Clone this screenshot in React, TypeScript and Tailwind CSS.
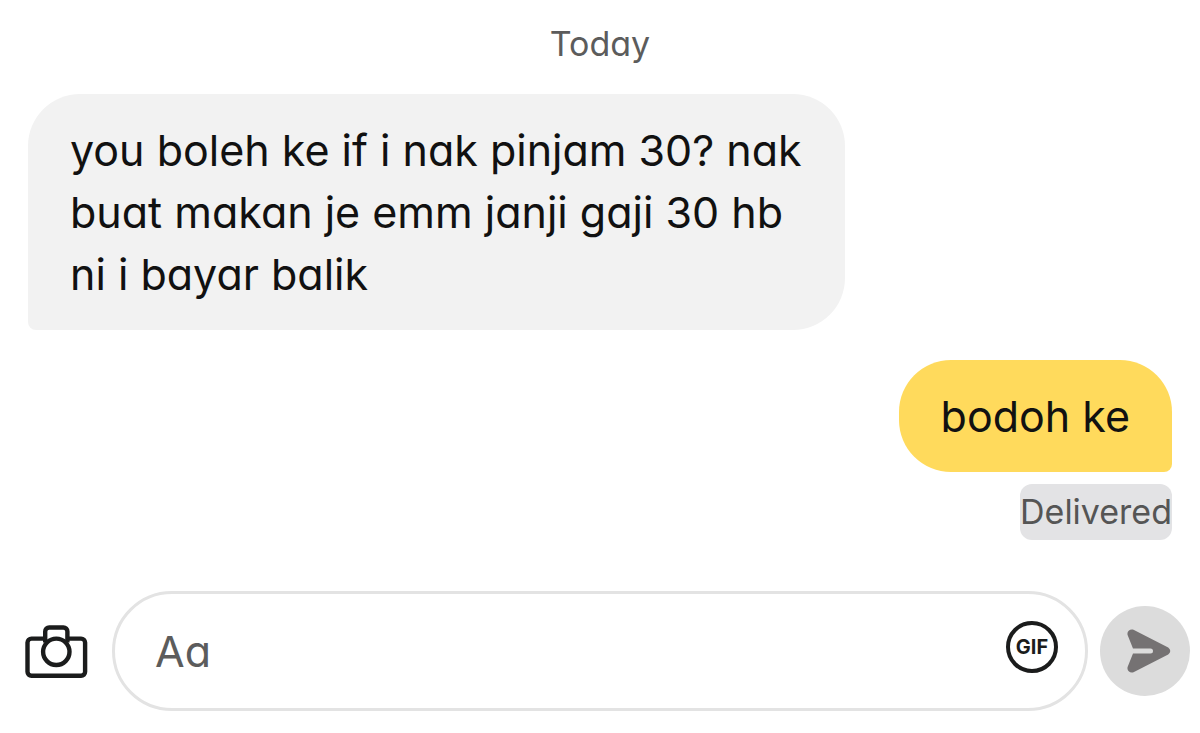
import { useState } from 'react'

type Message = {
  id: number
  text: string
  mine: boolean
  status?: string
}

const messages: Message[] = [
  {
    id: 1,
    text: 'you boleh ke if i nak pinjam 30? nak buat makan je emm janji gaji 30 hb ni i bayar balik',
    mine: false,
  },
  { id: 2, text: 'bodoh ke', mine: true, status: 'Delivered' },
]

function CameraIcon() {
  return (
    <svg viewBox="0 0 64 54" className="h-[54px] w-16" fill="none" stroke="#1b1c1c" strokeWidth="4.4" strokeLinejoin="round">
      <path d="M20 14.6H7.5a4 4 0 0 0-4 4v29.2a4 4 0 0 0 4 4h49.6a4 4 0 0 0 4-4V18.6a4 4 0 0 0-4-4H44.6" />
      <path d="M21.2 18.5V7.5a4 4 0 0 1 4-4h14.2a4 4 0 0 1 4 4v11" />
      <circle cx="32.3" cy="27.8" r="13.2" />
    </svg>
  )
}

function SendIcon() {
  return (
    <svg viewBox="0 0 44 44" className="h-11 w-11" fill="#757273">
      <path d="M6.5 0.8 41.2 18.6Q45.4 22 41.2 25.4L6.5 43.2C3 44.4 -0.4 41.5 0.6 38L6 24.5H23.5A2.5 2.5 0 0 0 23.5 19.5H6L0.6 6C-0.4 2.5 3 -0.4 6.5 0.8Z" />
    </svg>
  )
}

function Bubble({ message }: { message: Message }) {
  if (message.mine) {
    return (
      <div className="flex flex-col items-end">
        <p className="rounded-[52px] rounded-br-lg bg-[#ffda5c] px-[42px] py-[25px] text-[43px] leading-[62px]">{message.text}</p>
        <span className="mt-3 rounded-xl bg-[#e3e3e5] text-[34px] leading-[56px] text-[#555]">{message.status}</span>
      </div>
    )
  }

  return (
    <p className="max-w-[817px] self-start rounded-[52px] rounded-bl-lg bg-[#f2f2f2] px-[42px] py-[25px] text-[43px] leading-[62px]">
      {message.text}
    </p>
  )
}

export default function App() {
  const [draft, setDraft] = useState('')

  return (
    <main className="flex min-h-screen flex-col bg-white font-['Inter','Liberation_Sans',sans-serif] text-[#111] [font-feature-settings:'cv11']">
      <section className="flex flex-1 flex-col px-7 pt-4">
        <h2 className="text-center text-[34px] leading-[56px] text-[#5c5c5c]">Today</h2>
        <div className="mt-[22px] flex flex-col gap-[30px]">
          {messages.map((message) => (
            <Bubble key={message.id} message={message} />
          ))}
        </div>
      </section>

      <form
        onSubmit={(e) => {
          e.preventDefault()
          setDraft('')
        }}
        className="flex items-center pt-6 pr-[10px] pb-[22px] pl-6"
      >
        <button type="button" aria-label="Camera" className="mr-6">
          <CameraIcon />
        </button>
        <div className="flex h-[120px] min-w-0 flex-1 items-center rounded-full border-[3px] border-[#e3e3e3] pr-[27px] pl-10">
          <input
            aria-label="Message"
            placeholder="Aa"
            value={draft}
            onChange={(e) => setDraft(e.target.value)}
            className="min-w-0 flex-1 bg-transparent text-[43px] leading-[62px] outline-none placeholder:text-[#5c5c5c]"
          />
          <button
            type="button"
            className="mb-2 flex h-[52px] w-[52px] items-center justify-center rounded-full border-4 border-[#1b1c1c] text-xl font-bold text-[#1b1c1c]"
          >
            GIF
          </button>
        </div>
        <button type="submit" aria-label="Send" className="ml-3 flex h-[90px] w-[90px] items-center justify-center rounded-full bg-[#dcdcdc] pl-2">
          <SendIcon />
        </button>
      </form>
    </main>
  )
}
